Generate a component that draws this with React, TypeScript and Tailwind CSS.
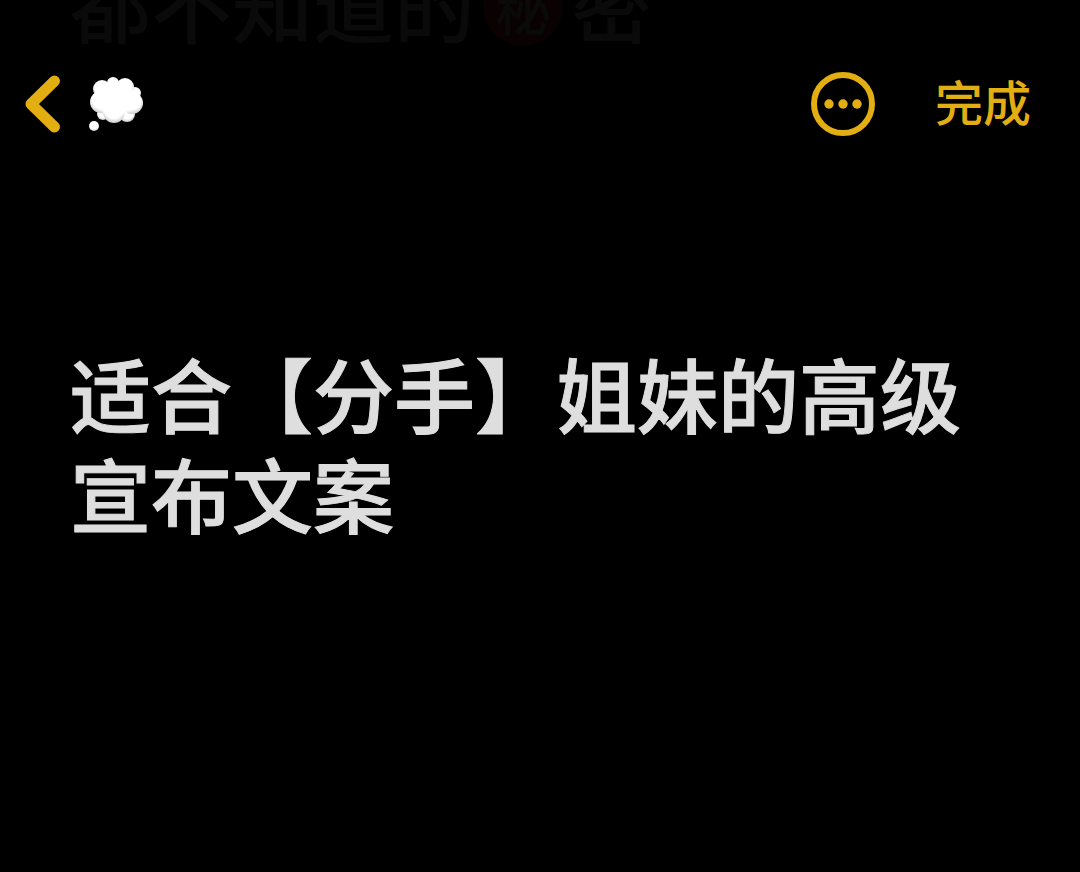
const ThoughtBalloon = () => (
  <svg viewBox="0 0 54 56" className="h-14 w-[54px]" role="img" aria-label="thought balloon">
    <defs>
      <radialGradient id="puff" cx="0.5" cy="0.4" r="0.65">
        <stop offset="0.6" stopColor="#ffffff" />
        <stop offset="1" stopColor="#bdbdbd" />
      </radialGradient>
      <radialGradient id="core">
        <stop offset="0.8" stopColor="#ffffff" />
        <stop offset="1" stopColor="#ffffff" stopOpacity="0" />
      </radialGradient>
    </defs>
    <g fill="url(#puff)">
      <circle cx="46" cy="17" r="6" />
      <circle cx="14" cy="38" r="6" />
      <circle cx="24" cy="7" r="6" />
      <circle cx="13" cy="13" r="9" />
      <circle cx="36" cy="11" r="9" />
      <circle cx="38" cy="38" r="8" />
      <circle cx="12" cy="26" r="11" />
      <circle cx="43" cy="27" r="11" />
      <circle cx="25" cy="36" r="11" />
    </g>
    <ellipse cx="27" cy="23" rx="23" ry="18" fill="url(#core)" />
    <circle cx="5" cy="50" r="5" fill="url(#puff)" />
  </svg>
);

const BackIcon = () => (
  <svg viewBox="0 0 36 58" className="h-[58px] w-9" fill="none" aria-hidden="true">
    <path d="M29.500 6 6 29 29.500 52" stroke="currentColor" strokeWidth="11" strokeLinecap="round" strokeLinejoin="round" />
  </svg>
);

const MoreIcon = () => (
  <svg viewBox="0 0 64 64" className="size-16" fill="currentColor" aria-hidden="true">
    <circle cx="32" cy="32" r="29" fill="none" stroke="currentColor" strokeWidth="6" />
    <circle cx="18" cy="32" r="4.700" />
    <circle cx="32" cy="32" r="4.700" />
    <circle cx="46" cy="32" r="4.700" />
  </svg>
);

export default function App() {
  return (
    <div className="min-h-screen bg-black font-['Noto_Sans_CJK_SC',sans-serif] font-medium text-[#dedede]">
      {/* tail of the previous line, fading out under the nav bar */}
      <div className="flex h-14 items-end overflow-hidden px-[70px] pb-1 text-[81px] leading-[100px] text-[#0a0a0a]">
        <p className="flex shrink-0 items-center whitespace-nowrap">
          都不知道的
          <span className="mx-2 mt-2 flex size-20 items-center justify-center rounded-full bg-[#0a0202] text-[56px]">
            秘
          </span>
          密
        </p>
      </div>

      <header className="flex h-24 items-center justify-between pr-[49px] pl-[25px] text-[#e2ae12]">
        <button type="button" className="flex items-center gap-7" aria-label="返回">
          <BackIcon />
          <ThoughtBalloon />
        </button>
        <div className="flex items-center gap-[60px]">
          <button type="button" aria-label="更多">
            <MoreIcon />
          </button>
          <button type="button" className="pb-2 text-[48px] leading-16">
            完成
          </button>
        </div>
      </header>

      <main className="px-[70px] pt-[190px]">
        <h1 className="text-[81px] leading-[100px] [-webkit-text-stroke:1px]">适合【分手】姐妹的高级宣布文案</h1>
      </main>
    </div>
  );
}
